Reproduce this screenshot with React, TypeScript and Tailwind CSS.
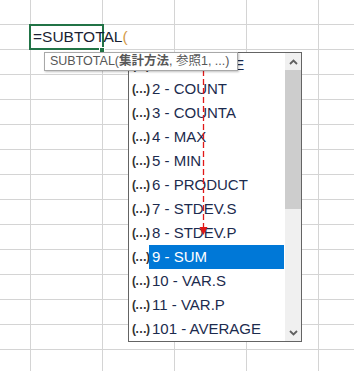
import React from 'react';

const ROWS = 15;
const COLS = [31, 72, 72, 72, 72, 72];

const ITEMS = [
  '1 - AVERAGE',
  '2 - COUNT',
  '3 - COUNTA',
  '4 - MAX',
  '5 - MIN',
  '6 - PRODUCT',
  '7 - STDEV.S',
  '8 - STDEV.P',
  '9 - SUM',
  '10 - VAR.S',
  '11 - VAR.P',
  '101 - AVERAGE',
];

function Sheet() {
  return (
    <div className="flex flex-col">
      {Array.from({ length: ROWS }).map((_, r) => (
        <div key={r} className="flex h-[25px] shrink-0 border-b border-[#d4d4d4]">
          {COLS.map((w, c) => (
            <div key={c} className="h-full shrink-0 border-r border-[#d4d4d4]" style={{ width: w }} />
          ))}
        </div>
      ))}
    </div>
  );
}

function Chevron({ up }: { up?: boolean }) {
  return (
    <svg width="9" height="6" viewBox="0 0 9 6" className={up ? '' : 'rotate-180'}>
      <path d="M1 5 L4.5 1.5 L8 5" fill="none" stroke="#606060" strokeWidth="1.8" />
    </svg>
  );
}

export default function App() {
  return (
    <div className="relative w-[354px] h-[371px] overflow-hidden bg-white font-['Liberation_Sans','Noto_Sans_CJK_JP',sans-serif]">
      <Sheet />

      {/* active cell */}
      <div className="absolute left-[29px] top-[24px] w-[75px] h-[26px] border-2 border-[#217346] flex items-center pl-[2px]">
        <span className="text-[15.5px] leading-none text-[#1a1f33] whitespace-nowrap">
          =SUBTOTAL<span className="text-[#d49a4a]">(</span>
        </span>
      </div>
      <div className="absolute left-[99px] top-[47px] w-[6px] h-[6px] bg-[#217346] border border-white" />

      {/* dropdown list */}
      <div className="absolute left-[128px] top-[52px] w-[174px] h-[290px] border border-[#646464] bg-white flex">
        <div className="flex flex-col flex-1">
          {ITEMS.map((t) => {
            const sel = t === '9 - SUM';
            return (
              <div key={t} className="flex h-[24px] items-center">
                <span className="w-[20px] pl-[3px] text-[12px] font-bold tracking-[-1px] text-[#333]">(…)</span>
                <span
                  className={`flex-1 h-full flex items-center pl-[3px] mr-[1px] text-[15px] whitespace-nowrap ${
                    sel ? 'bg-[#0078d7] text-white' : 'text-[#1c2b4e]'
                  }`}
                >
                  {t}
                </span>
              </div>
            );
          })}
        </div>
        <div className="w-[16px] bg-[#f0f0f0] flex flex-col">
          <div className="h-[17px] flex items-center justify-center">
            <Chevron up />
          </div>
          <div className="h-[139px] bg-[#cdcdcd]" />
          <div className="flex-1" />
          <div className="h-[17px] flex items-center justify-center">
            <Chevron />
          </div>
        </div>
      </div>

      {/* red dashed marker */}
      <svg className="absolute left-[198px] top-[52px]" width="11" height="184" viewBox="0 0 11 184">
        <line x1="5.5" y1="0" x2="5.5" y2="176" stroke="#e01818" strokeWidth="1.3" strokeDasharray="6 3" />
        <path d="M1.5 175 L9.5 175 L5.5 183 Z" fill="#e01818" />
      </svg>

      {/* tooltip */}
      <div className="absolute left-[44px] top-[52px] w-[194px] h-[19px] bg-white border border-[#a8a8a8] shadow-[1px_1px_2px_rgba(0,0,0,0.25)] flex items-center pl-[5px]">
        <span className="text-[12.5px] leading-none text-[#575757] whitespace-nowrap">
          SUBTOTAL(<b>集計方法</b>, 参照1, ...)
        </span>
      </div>
    </div>
  );
}
